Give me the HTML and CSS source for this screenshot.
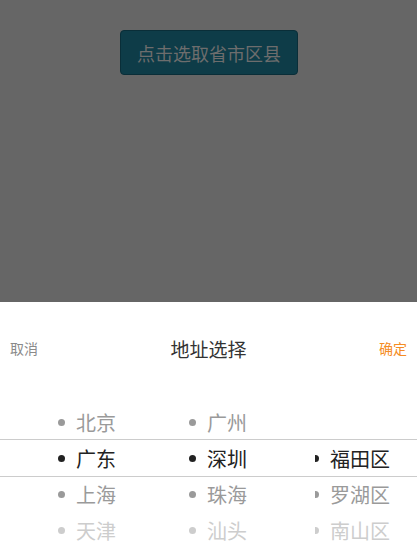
FILE: index.html
```html
<!DOCTYPE html>
<html lang="zh-CN">
<head>
<meta charset="utf-8">
<title>地址选择</title>
<link rel="stylesheet" href="styles.css">
</head>
<body>
<main class="page">
  <button class="pick-btn">点击选取省市区县</button>
</main>
<section class="sheet">
  <header class="sheet-head">
    <span class="cancel">取消</span>
    <h1 class="title">地址选择</h1>
    <span class="ok">确定</span>
  </header>
  <div class="wheel">
    <ul class="col col1">
      <li class="it far"></li>
      <li class="it">北京</li>
      <li class="it sel">广东</li>
      <li class="it">上海</li>
      <li class="it faint">天津</li>
    </ul>
    <ul class="col col2">
      <li class="it far"></li>
      <li class="it">广州</li>
      <li class="it sel">深圳</li>
      <li class="it">珠海</li>
      <li class="it faint">汕头</li>
    </ul>
    <ul class="col col3">
      <li class="it far"></li>
      <li class="it empty"></li>
      <li class="it sel">福田区</li>
      <li class="it">罗湖区</li>
      <li class="it faint">南山区</li>
    </ul>
    <div class="band"></div>
  </div>
</section>
</body>
</html>
```

FILE: styles.css
```css
html, body {
  margin: 0;
  padding: 0;
}
body {
  width: 417px;
  height: 545px;
  overflow: hidden;
  background: #666666;
  font-family: "Noto Sans CJK SC", "Noto Sans", sans-serif;
  display: flex;
  flex-direction: column;
}
.page {
  flex: none;
  height: 302px;
  display: flex;
  justify-content: center;
  align-items: flex-start;
  padding-top: 30px;
  box-sizing: border-box;
}
.pick-btn {
  margin-left: 1px;
  width: 178px;
  height: 45px;
  background: #0e3c48;
  border: 1px solid #0a2e38;
  border-radius: 4px;
  color: #6d6d6d;
  font-family: inherit;
  font-size: 18px;
  line-height: 1;
  padding: 0;
}
.sheet {
  flex: none;
  background: #ffffff;
  display: flex;
  flex-direction: column;
  min-height: 243px;
}
.sheet-head {
  flex: none;
  height: 40px;
  margin-top: 26px;
  display: flex;
  align-items: center;
  justify-content: space-between;
  padding: 0 10px;
}
.cancel {
  font-size: 14px;
  color: #8a8a8a;
  width: 60px;
}
.ok {
  font-size: 14px;
  color: #f58c23;
  width: 60px;
  text-align: right;
}
.title {
  margin: 0;
  font-size: 19px;
  font-weight: normal;
  color: #333333;
}
.wheel {
  position: relative;
  display: grid;
  grid-template-columns: 139px 139px 139px;
}
.col {
  list-style: none;
  margin: 0;
  padding: 0;
}
.it {
  height: 36px;
  display: flex;
  align-items: center;
  gap: 11px;
  font-size: 20px;
  color: #9a9a9a;
  white-space: nowrap;
}
.it::before {
  content: "";
  width: 7px;
  height: 7px;
  border-radius: 50%;
  background: currentColor;
  flex: none;
}
.it.far::before,
.it.empty::before {
  display: none;
}
.it.sel {
  color: #222222;
}
.it.faint {
  color: #cdcdcd;
}
.col1 .it { padding-left: 58px; }
.col2 .it { padding-left: 50px; }
.col3 .it { padding-left: 37px; }
.col3 .it::before {
  width: 4px;
  border-radius: 0 4px 4px 0;
}
.band {
  position: absolute;
  left: 0;
  right: 0;
  top: 71px;
  height: 36px;
  border-top: 1px solid #cccccc;
  border-bottom: 1px solid #cccccc;
  pointer-events: none;
}
```
